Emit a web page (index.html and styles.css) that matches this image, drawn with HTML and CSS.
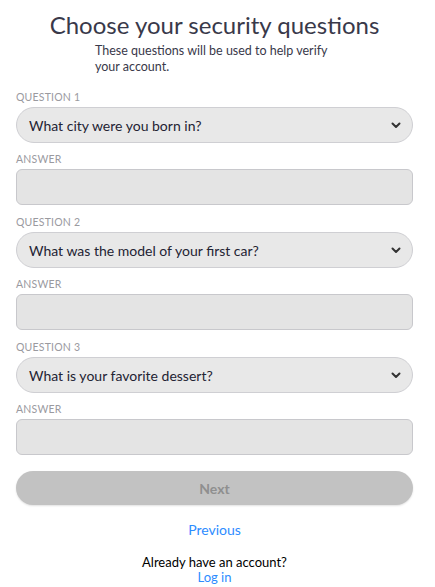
FILE: index.html
```html
<!DOCTYPE html>
<html lang="en">
<head>
<meta charset="utf-8">
<title>Choose your security questions</title>
<link rel="stylesheet" href="styles.css">
</head>
<body>
<main class="page">
  <h1 class="title">Choose your security questions</h1>
  <p class="subtitle">These questions will be used to help verify your account.</p>

  <form class="form">
    <div class="group">
      <label class="label">Question 1</label>
      <div class="select">
        <span class="select-text">What city were you born in?</span>
        <svg class="chev" width="10" height="7" viewBox="0 0 10 7"><path d="M1.5 1.5 L5 5 L8.5 1.5" fill="none" stroke="#333" stroke-width="2" stroke-linecap="round" stroke-linejoin="round"/></svg>
      </div>
      <label class="label">Answer</label>
      <div class="input"></div>
    </div>
    <div class="group">
      <label class="label">Question 2</label>
      <div class="select">
        <span class="select-text">What was the model of your first car?</span>
        <svg class="chev" width="10" height="7" viewBox="0 0 10 7"><path d="M1.5 1.5 L5 5 L8.5 1.5" fill="none" stroke="#333" stroke-width="2" stroke-linecap="round" stroke-linejoin="round"/></svg>
      </div>
      <label class="label">Answer</label>
      <div class="input"></div>
    </div>
    <div class="group">
      <label class="label">Question 3</label>
      <div class="select">
        <span class="select-text">What is your favorite dessert?</span>
        <svg class="chev" width="10" height="7" viewBox="0 0 10 7"><path d="M1.5 1.5 L5 5 L8.5 1.5" fill="none" stroke="#333" stroke-width="2" stroke-linecap="round" stroke-linejoin="round"/></svg>
      </div>
      <label class="label">Answer</label>
      <div class="input"></div>
    </div>

    <div class="btn-next">Next</div>
  </form>

  <a class="link previous" href="#">Previous</a>
  <div class="account">
    <div>Already have an account?</div>
    <a class="link" href="#">Log in</a>
  </div>
</main>
</body>
</html>
```

FILE: styles.css
```css
* { box-sizing: border-box; }
html, body { margin: 0; padding: 0; background: #fff; }
body {
  font-family: Lato, "Open Sans", Arial, sans-serif;
  color: #232333;
  width: 435px;
  height: 587px;
  overflow: hidden;
}
.page {
  padding: 10px 22px 0 16px;
  display: flex;
  flex-direction: column;
}
.title {
  margin: 0;
  font-size: 24px;
  font-weight: 400;
  text-align: center;
  color: #39394a;
  line-height: 30px;
}
.subtitle {
  width: 245px;
  margin: 3px 0 0 79px;
  font-size: 12.5px;
  line-height: 16px;
  color: #39394a;
}
.form {
  margin-top: 16px;
  display: flex;
  flex-direction: column;
}
.group {
  display: flex;
  flex-direction: column;
}
.label {
  font-size: 10.5px;
  line-height: 13px;
  text-transform: uppercase;
  color: #9a9a9f;
  letter-spacing: 0.2px;
  margin-bottom: 3px;
}
.select {
  height: 36px;
  border: 1px solid #cfcfd3;
  border-radius: 18px;
  background: #e8e8e8;
  display: flex;
  align-items: center;
  justify-content: space-between;
  padding: 0 11px 0 12px;
  margin-bottom: 10px;
}
.select-text {
  font-size: 14px;
  color: #232333;
}
.chev { display: block; }
.input {
  height: 36px;
  border: 1px solid #c8c8cc;
  border-radius: 6px;
  background: #e4e4e4;
  margin-bottom: 11px;
}
.btn-next {
  margin-top: 5px;
  height: 34px;
  border-radius: 17px;
  background: #c2c2c2;
  color: #8f8f8f;
  font-weight: 700;
  font-size: 14px;
  display: flex;
  align-items: center;
  justify-content: center;
  box-shadow: 0 1px 2px rgba(0,0,0,0.12);
}
.link {
  color: #2d8cff;
  text-decoration: none;
}
.previous {
  align-self: center;
  margin-top: 16px;
  font-size: 14px;
  line-height: 18px;
}
.account {
  margin-top: 16px;
  text-align: center;
  font-size: 13px;
  line-height: 15px;
  color: #000;
}
```
